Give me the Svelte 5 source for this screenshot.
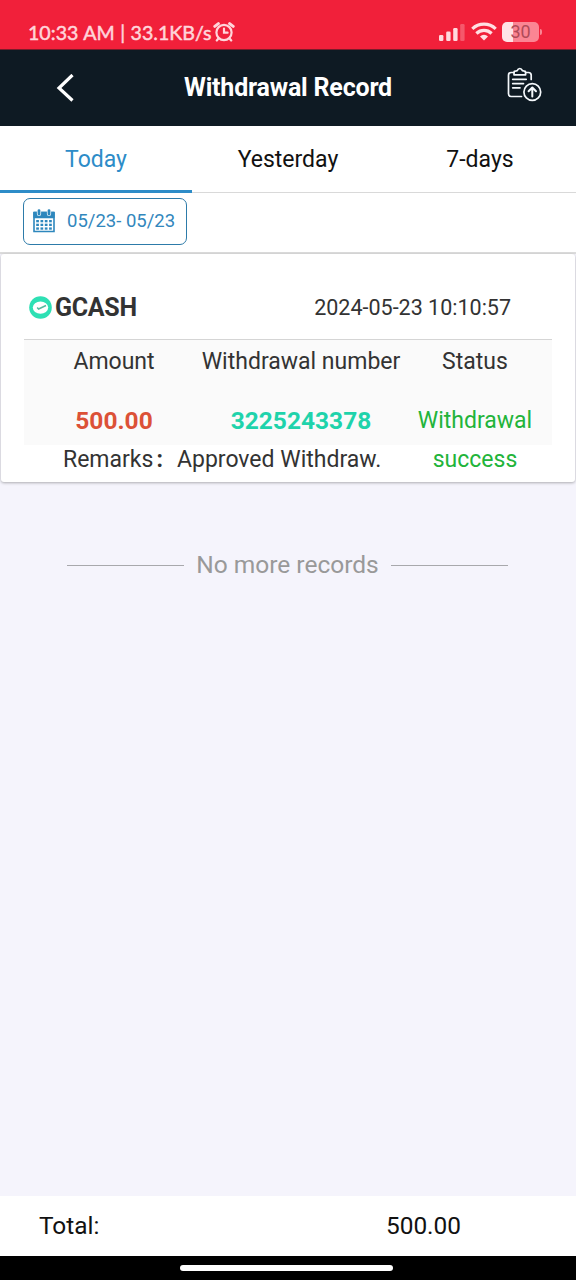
<script lang="ts">
	interface WithdrawalRecord {
		channel: string;
		time: string;
		amount: string;
		number: string;
		status: string;
		remarks: string;
	}

	const tabs = ['Today', 'Yesterday', '7-days'];
	const dots = [0, 1, 2, 3].flatMap((col) => [0, 1, 2].map((row) => ({ col, row })));
	const records: WithdrawalRecord[] = [
		{
			channel: 'GCASH',
			time: '2024-05-23 10:10:57',
			amount: '500.00',
			number: '3225243378',
			status: 'Withdrawal success',
			remarks: 'Approved Withdraw.'
		}
	];

	let active = $state('Today');
</script>

<div class="screen">
	<div class="status-bar">
		<span class="clock">10:33 AM | 33.1KB/s</span>
		<svg class="alarm" width="22" height="20" viewBox="0 0 22 20" fill="none" stroke="#ffd5da" stroke-width="2.2" stroke-linecap="round">
			<circle cx="11" cy="10.5" r="7.6" />
			<path d="M11 6.5v4.2h3.6M5.4 16.5l-1.6 2M16.6 16.5l1.6 2" />
			<path d="M1.8 4.4l3.6-2.8M20.2 4.4l-3.6-2.8" stroke-width="3" />
		</svg>
		<svg class="signal" width="27" height="18" viewBox="0 0 27 18" fill="#ffd9de">
			<rect x="0" y="12" width="4.4" height="6" rx="1.2" />
			<rect x="7.2" y="8.5" width="4.4" height="9.5" rx="1.2" />
			<rect x="14.2" y="5" width="4.4" height="13" rx="1.2" />
			<rect x="21.2" y="1" width="4.4" height="17" rx="1.2" opacity="0.3" />
		</svg>
		<svg class="wifi" width="26" height="19" viewBox="0 0 26 19" fill="none" stroke="#ffdfe3" stroke-width="3.2">
			<path d="M1.3 6.8a17 17 0 0 1 23.4 0" />
			<path d="M5.4 11.5a11 11 0 0 1 15.2 0" />
			<path d="M13 18.6l-4-4.2a6 6 0 0 1 8 0z" fill="#ffdfe3" stroke="none" />
		</svg>
		<span class="battery"><span>30</span></span>
	</div>

	<header class="nav">
		<button type="button" class="nav-btn" aria-label="Back">
			<svg width="18" height="28" viewBox="0 0 18 28" fill="none" stroke="#fff" stroke-width="3.2">
				<path d="M16.5 1L3 14L16.5 26.5" />
			</svg>
		</button>
		<h1>Withdrawal Record</h1>
		<button type="button" class="nav-btn nav-btn--right" aria-label="Withdraw">
			<svg width="36" height="36" viewBox="0 0 36 36" fill="none" stroke="#f4f8fb" stroke-width="1.7" stroke-linecap="round" stroke-linejoin="round">
				<path d="M7 5.5H4.2Q1.5 5.5 1.5 8.2V26.8Q1.5 29.5 4.2 29.5H14.5M18.5 5.5H21.5Q24.2 5.5 24.2 8.2V12.5" />
				<path d="M7 7.8V5.2Q7 4.3 8 4.2L10.3 3.6Q11 1.5 12.8 1.5T15.4 3.6L17.6 4.2Q18.6 4.3 18.6 5.2V7.8Z" />
				<path d="M5.7 12.3H19.2M5.7 16.6H16.5M5.7 20.8H13" />
				<circle cx="25.3" cy="25" r="8.4" />
				<path d="M25.3 29.5V20.8M21.6 24.3L25.3 20.5L29 24.3" stroke-width="2" />
			</svg>
		</button>
	</header>

	<nav class="tabs">
		{#each tabs as tab}
			<button type="button" class="tab" class:tab--active={active === tab} onclick={() => (active = tab)}>
				{tab}
			</button>
		{/each}
	</nav>

	<div class="filter">
		<button type="button" class="range">
			<svg width="22" height="24" viewBox="0 0 22 24">
				<path d="M1 3.5H21V22.5H1Z" fill="#fff" stroke="#2d87bd" stroke-width="1.6" />
				<rect x="0.3" y="2.8" width="21.4" height="6.4" rx="1" fill="#2d87bd" />
				<path d="M6 1.8V5M16 1.8V5" stroke="#fff" stroke-width="4.2" stroke-linecap="round" />
				<path d="M6 1.6V5M16 1.6V5" stroke="#2d87bd" stroke-width="2.8" stroke-linecap="round" />
				{#each dots as dot}
					<rect x={3.2 + dot.col * 4.3} y={11 + dot.row * 3.7} width="2.7" height="2.3" fill="#2d87bd" />
				{/each}
			</svg>
			<span>05/23- 05/23</span>
		</button>
	</div>

	<main class="list">
		{#each records as record}
			<article class="card">
				<div class="card-head">
					<svg width="23" height="23" viewBox="0 0 23 23">
						<circle cx="11.5" cy="11.5" r="11.3" fill="#2ee0b4" />
						<ellipse cx="11.5" cy="11.6" rx="7.7" ry="6.2" fill="#fff" />
						<path d="M8.2 11.4L9.6 13L17 9.5" fill="none" stroke="#55b99d" stroke-width="1.5" />
					</svg>
					<strong>{record.channel}</strong>
					<time>{record.time}</time>
				</div>
				<div class="details">
					<div class="col">
						<span class="label">Amount</span>
						<span class="value amount">{record.amount}</span>
					</div>
					<div class="col col--number">
						<span class="label">Withdrawal number</span>
						<span class="value number">{record.number}</span>
					</div>
					<div class="col col--status">
						<span class="label">Status</span>
						<span class="value status">{record.status}</span>
					</div>
				</div>
				<div class="remarks">
					<span class="remarks-label">Remarks<i>:</i></span>
					<span>{record.remarks}</span>
				</div>
			</article>
		{/each}
		<p class="end"><span>No more records</span></p>
	</main>

	<footer class="total">
		<span class="total-label">Total:</span>
		<span class="total-value">500.00</span>
	</footer>
	<div class="home-bar"><span></span></div>
</div>

<style>
	:global(body) {
		margin: 0;
	}
	.screen {
		display: flex;
		flex-direction: column;
		height: 1280px;
		overflow: hidden;
		background: #f5f4fc;
		font-family: Roboto, 'Liberation Sans', sans-serif;
		font-size: 23px;
		color: #333;
	}
	button {
		padding: 0;
		border: 0;
		background: none;
		font: inherit;
		cursor: pointer;
	}
	svg {
		display: block;
		flex: none;
	}
	.status-bar {
		display: flex;
		align-items: center;
		flex: none;
		box-sizing: border-box;
		height: 50px;
		padding: 14px 37px 0 28px;
		border-bottom: 1px solid #7c1b2a;
		background: #f1203a;
	}
	.clock {
		width: 185px;
		padding-top: 2px;
		font-family: Lato, sans-serif;
		font-size: 19.6px;
		word-spacing: 0.5px;
		-webkit-text-stroke: 0.5px #ffd5da;
		color: #ffd5da;
		white-space: nowrap;
	}
	.alarm {
		margin-top: 0;
	}
	.signal {
		margin: 0 0 0 auto;
	}
	.wifi {
		margin: -1px 5px 0 5px;
	}
	.battery {
		display: flex;
		align-items: center;
		justify-content: center;
		position: relative;
		width: 37px;
		height: 20px;
		border-radius: 5px;
		background: linear-gradient(90deg, #ffe3e6 30%, #fb8593 30%);
		font-size: 18px;
		color: #b04a58;
	}
	.battery::after {
		content: '';
		position: absolute;
		right: -3px;
		top: 7px;
		width: 2px;
		height: 6px;
		border-radius: 0 2px 2px 0;
		background: #fb8593;
	}
	.nav {
		display: flex;
		align-items: center;
		flex: none;
		height: 76px;
		background: #0e1a23;
	}
	.nav-btn {
		display: flex;
		box-sizing: border-box;
		width: 120px;
		padding-left: 56px;
	}
	.nav-btn--right {
		padding: 0 0 6px 51px;
	}
	h1 {
		flex: 1;
		margin: 0;
		font-size: 25px;
		font-weight: 700;
		line-height: 30px;
		letter-spacing: -0.2px;
		text-align: center;
		white-space: nowrap;
		color: #fff;
	}
	.tabs {
		display: flex;
		flex: none;
		height: 67px;
		background: #fff;
	}
	.tab {
		flex: 1;
		box-sizing: border-box;
		padding-top: 1px;
		border-bottom: 1px solid #d9d9d9;
		color: #111;
	}
	.tab--active {
		padding-top: 3px;
		border-bottom: 3px solid #2d8cc8;
		color: #2d8cc8;
	}
	.filter {
		flex: none;
		box-sizing: border-box;
		height: 61px;
		padding: 5px 23px;
		border-bottom: 2px solid #dcdcdc;
		background: #fff;
	}
	.range {
		display: flex;
		align-items: center;
		gap: 12px;
		box-sizing: border-box;
		width: 164px;
		height: 47px;
		padding: 0 0 1px 9px;
		border: 1px solid #2d7ba9;
		border-radius: 7px;
		font-size: 18.5px;
		color: #3287bd;
		white-space: nowrap;
	}
	.list {
		flex: 1;
	}
	.card {
		box-sizing: border-box;
		height: 228px;
		margin: 0 1px;
		padding: 0 23px;
		border-radius: 3px;
		background: #fff;
		box-shadow: 0 1px 3px rgba(0, 0, 0, 0.3);
	}
	.card-head {
		display: flex;
		align-items: center;
		box-sizing: border-box;
		height: 86px;
		padding: 22px 41px 0 5px;
		border-bottom: 1px solid #d5d5d5;
	}
	.card-head strong {
		margin-left: 3px;
		font-size: 25px;
		letter-spacing: -0.3px;
	}
	time {
		margin-left: auto;
		font-size: 21.5px;
	}
	.details {
		display: flex;
		height: 105px;
		background: #fafafa;
	}
	.col {
		display: flex;
		flex-direction: column;
		width: 180px;
		text-align: center;
		white-space: nowrap;
	}
	.col--number {
		width: 194px;
		align-items: center;
	}
	.col--status {
		width: 154px;
	}
	.label {
		line-height: 43px;
	}
	.value {
		margin-top: 18px;
		line-height: 39px;
	}
	.amount,
	.number {
		font-size: 24.5px;
		font-weight: 700;
	}
	.amount {
		color: #dc5137;
	}
	.number {
		color: #1fd3ab;
	}
	.status {
		padding: 0 15px;
		color: #22b43a;
		white-space: normal;
	}
	.remarks {
		display: flex;
		padding-left: 39px;
		line-height: 29px;
		white-space: nowrap;
	}
	.remarks-label {
		width: 114px;
	}
	.remarks-label i {
		margin-left: 3px;
		font-style: normal;
		font-weight: 700;
	}
	.end {
		display: flex;
		align-items: center;
		gap: 12px;
		margin: 68px 68px 0 67px;
		font-size: 24.5px;
		line-height: 30px;
		white-space: nowrap;
		color: #999;
	}
	.end::before,
	.end::after {
		content: '';
		flex: 1;
		height: 1px;
		margin-top: 1px;
		background: #a8a8ac;
	}
	.total {
		display: flex;
		align-items: center;
		flex: none;
		box-sizing: border-box;
		height: 60px;
		padding: 0 0 2px 39px;
		background: #fff;
		font-size: 24.4px;
		color: #111;
	}
	.total-label {
		width: 347px;
	}
	.home-bar {
		display: flex;
		align-items: center;
		justify-content: center;
		flex: none;
		height: 24px;
		background: #000;
	}
	.home-bar span {
		width: 213px;
		height: 6px;
		margin-left: -3px;
		border-radius: 3px;
		background: #fff;
	}
</style>
